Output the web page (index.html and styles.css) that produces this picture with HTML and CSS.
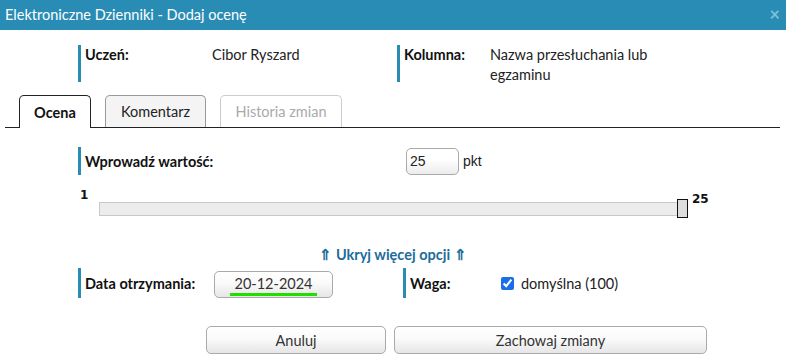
FILE: index.html
```html
<!DOCTYPE html>
<html>
<head>
    <link rel="stylesheet" href="styles.css">
</head>
<body>
    <div class="titlebar">
        <span class="title">Elektroniczne Dzienniki - Dodaj ocenę</span>
        <span class="close">&times;</span>
    </div>

    <div class="info">
        <div class="field field-student">
            <div class="label label-student">Uczeń:</div>
            <div class="value">Cibor Ryszard</div>
        </div>
        <div class="field field-column">
            <div class="label label-column">Kolumna:</div>
            <div class="value value-column">Nazwa przesłuchania lub egzaminu</div>
        </div>
    </div>

    <div class="tabs">
        <div class="tab active">Ocena</div>
        <div class="tab komentarz">Komentarz</div>
        <div class="tab disabled">Historia zmian</div>
    </div>

    <div class="form">
        <div class="row">
            <div class="field field-value">
                <div class="label label-value">Wprowadź wartość:</div>
                <div class="number">25</div>
                <span class="unit">pkt</span>
            </div>
        </div>

        <div class="slider">
            <div class="min">1</div>
            <div class="track"><div class="handle"></div></div>
            <div class="max">25</div>
        </div>

        <div class="toggle">&#x21D1; Ukryj więcej opcji &#x21D1;</div>

        <div class="row">
            <div class="field field-date">
                <div class="label label-date">Data otrzymania:</div>
                <div class="btn date-btn"><span class="date">20-12-2024</span></div>
            </div>
            <div class="field field-weight">
                <div class="label label-weight">Waga:</div>
                <label class="check"><input type="checkbox" checked> domyślna (100)</label>
            </div>
        </div>
    </div>

    <div class="actions">
        <div class="btn cancel">Anuluj</div>
        <div class="btn save">Zachowaj zmiany</div>
    </div>
</body>
</html>
```

FILE: styles.css
```css
body {
    margin: 0;
    font-family: Lato, "Noto Sans", sans-serif;
    font-size: 14.5px;
    color: #222;
    background-color: #fff;
}
.titlebar {
    height: 30px;
    background-color: #298cb5;
    color: #fff;
    display: flex;
    justify-content: space-between;
    align-items: center;
    padding: 0 6px 2px 5px;
    box-sizing: border-box;
}
.title {
    font-size: 14.5px;
}
.close {
    color: #7cc0d9;
    font-size: 18px;
    font-weight: bold;
}
.field {
    display: flex;
    border-left: 3px solid #298cb5;
    padding-left: 4px;
}
.label {
    font-weight: bold;
    color: #111;
    flex: none;
}
.info {
    display: flex;
    margin-top: 15px;
    padding-left: 78px;
}
.info .field {
    height: 37px;
    line-height: 20px;
}
.field-student {
    width: 312px;
}
.label-student {
    width: 127px;
}
.label-column {
    width: 86px;
}
.value-column {
    width: 190px;
}
.tabs {
    display: flex;
    gap: 14px;
    margin: 13px 6px 0 5px;
    padding-left: 14px;
    border-bottom: 1px solid #222;
    height: 32px;
}
.tab {
    height: 32px;
    box-sizing: border-box;
    border: 1px solid #999;
    border-bottom: none;
    border-radius: 5px 5px 0 0;
    background-color: #f4f4f4;
    display: flex;
    justify-content: center;
    align-items: center;
    color: #222;
}
.tab.active {
    width: 72px;
    background-color: #fff;
    font-weight: bold;
    color: #111;
    height: 33px;
    border-color: #222;
}
.tab.komentarz {
    width: 101px;
}
.tab.disabled {
    width: 122px;
    color: #aaa;
    background-color: #fff;
    border-color: #ccc;
}
.form {
    padding-left: 78px;
}
.row {
    display: flex;
    margin-top: 19px;
}
.field-value {
    height: 28px;
    align-items: center;
}
.label-value {
    width: 321px;
}
.number {
    width: 53px;
    height: 27px;
    box-sizing: border-box;
    border: 1px solid #aaa;
    border-radius: 5px;
    background: linear-gradient(#fff, #fff 40%, #ececec);
    font-family: "Liberation Sans", Arial, sans-serif;
    font-size: 14px;
    line-height: 25px;
    padding-left: 3px;
}
.unit {
    font-family: "Liberation Sans", Arial, sans-serif;
    font-size: 14px;
    margin-left: 4px;
}
.slider {
    display: flex;
    align-items: flex-start;
    margin-top: 13px;
    font-family: "DejaVu Sans", sans-serif;
    font-weight: bold;
    font-size: 12px;
    color: #111;
}
.min {
    width: 21px;
    padding-left: 2px;
    box-sizing: border-box;
}
.track {
    position: relative;
    width: 589px;
    height: 14px;
    margin-top: 14px;
    box-sizing: border-box;
    border: 1px solid #c8c8c8;
    background-color: #ececec;
}
.handle {
    position: absolute;
    right: -1px;
    top: -4px;
    width: 11px;
    height: 19px;
    box-sizing: border-box;
    border: 1px solid #111;
    background-color: #ddd;
}
.max {
    margin-left: 4px;
    margin-top: 4px;
}
.toggle {
    margin-top: 31px;
    margin-left: -78px;
    text-align: center;
    color: #1d6c9b;
    font-weight: bold;
    line-height: 16px;
}
.toggle + .row {
    margin-top: 5px;
}
.field-date {
    width: 318px;
    height: 30px;
    align-items: center;
}
.label-date {
    width: 129px;
}
.btn {
    box-sizing: border-box;
    border: 1px solid #aaa;
    border-radius: 5px;
    background: linear-gradient(#fff, #fafafa 45%, #e6e6e6);
    display: flex;
    justify-content: center;
    align-items: center;
    color: #333;
}
.date-btn {
    width: 119px;
    height: 27px;
    margin-top: 3px;
    align-items: flex-end;
}
.date {
    border-bottom: 3px solid #22dd00;
    padding: 0 4px;
    line-height: 18px;
    margin-bottom: 1px;
}
.field-weight {
    height: 30px;
    align-items: center;
}
.label-weight {
    width: 91px;
}
.check {
    display: flex;
    align-items: center;
    gap: 7px;
}
.check input {
    margin: 0;
    width: 13px;
    height: 13px;
    accent-color: #1a6ee8;
}
.actions {
    display: flex;
    gap: 8px;
    margin-top: 28px;
    padding-left: 206px;
}
.actions .btn {
    height: 28px;
}
.cancel {
    width: 180px;
}
.save {
    width: 313px;
}
```
